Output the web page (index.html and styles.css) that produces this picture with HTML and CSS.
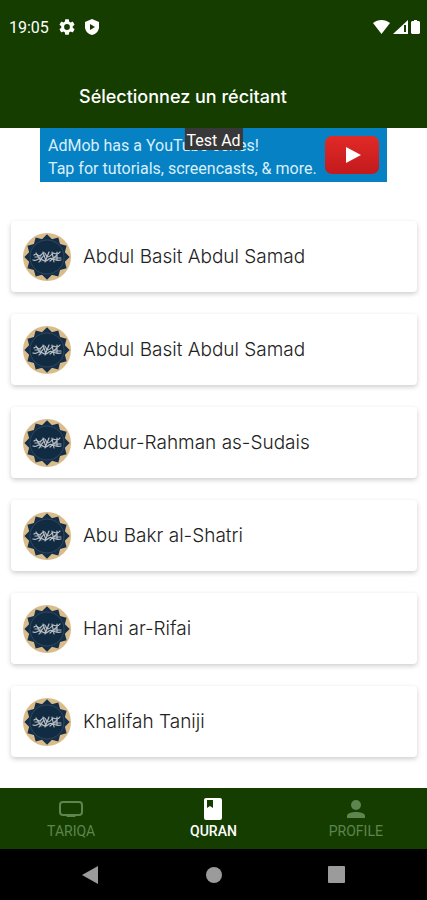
FILE: index.html
```html
<!DOCTYPE html>
<html lang="fr">

<head>
  <meta charset="utf-8">
  <meta name="viewport" content="width=device-width, initial-scale=1">
  <title>Quran</title>
  <link rel="stylesheet" href="styles.css">
</head>

<body>
  <svg class="sprite" aria-hidden="true">
    <symbol id="medallion" viewBox="0 0 48 48">
      <circle cx="24" cy="24" r="24" fill="#dabb8a" />
      <g fill="#142f49">
        <rect id="sq" x="8" y="8" width="32" height="32" transform="rotate(45 24 24)" />
        <use href="#sq" transform="rotate(30 24 24)" />
        <use href="#sq" transform="rotate(60 24 24)" />
      </g>
      <circle cx="24" cy="24" r="17" fill="#112b43" stroke="#36475a" />
      <g fill="none" stroke="#b9bec3" stroke-width="1.2" stroke-linecap="round">
        <path d="M11 22c3-3 4 3 7 0s4-3 5 0 4 2 6-1 4 3 8-2" />
        <path d="M10 27c4 2 5-3 8-1s5 3 8 0 5 3 12 1" />
        <path d="M13 20l5 8M20 19l3 9M26 19l-4 10M29 19l2 10M34 19v8M16 29l5-7M27 28l7-6M12 24h6M31 25h7" />
      </g>
    </symbol>
  </svg>

  <header class="header">
    <div class="status">
      <span class="time">19:05</span>
      <svg width="16" height="16" viewBox="2 2 20 20">
        <path fill="#fff" d="M19.14 12.94a7 7 0 0 0 0-1.88l2.03-1.58a.5.5 0 0 0 .12-.61l-1.92-3.32a.5.5 0 0 0-.59-.22l-2.39.96a7 7 0 0 0-1.62-.94l-.36-2.54a.5.5 0 0 0-.48-.41h-3.84a.5.5 0 0 0-.47.41l-.36 2.54a7 7 0 0 0-1.62.94l-2.39-.96a.5.5 0 0 0-.59.22L2.74 8.87a.5.5 0 0 0 .12.61l2.03 1.58a7 7 0 0 0 0 1.88l-2.03 1.58a.5.5 0 0 0-.12.61l1.92 3.32c.12.22.37.29.59.22l2.39-.96a7 7 0 0 0 1.62.94l.36 2.54c.05.24.24.41.48.41h3.84c.24 0 .44-.17.47-.41l.36-2.54a7 7 0 0 0 1.62-.94l2.39.96c.22.08.47 0 .59-.22l1.92-3.32a.5.5 0 0 0-.12-.61zM12 15.6a3.6 3.6 0 1 1 0-7.2 3.6 3.6 0 0 1 0 7.2z" />
      </svg>
      <svg width="14" height="16" viewBox="0 0 14 16">
        <path fill="#fff" d="M7 0l7 3v5c0 4-3 7-7 8-4-1-7-4-7-8V3z" />
        <path fill="#153d00" d="M5 5l5 3-5 3z" />
      </svg>
      <div class="signals">
        <svg width="17" height="14" viewBox="0 0 17 14">
          <path fill="#fff" d="M0 3c5-4 12-4 17 0L8.500 14z" />
        </svg>
        <svg width="15" height="14" viewBox="0 0 15 14">
          <path fill="#fff" d="M0 14L15 0v14z" />
          <path fill="#153d00" d="M11 5h2v7h-2z" />
        </svg>
        <svg width="9" height="14" viewBox="0 0 9 14">
          <path fill="#fff" d="M3 0h3v1h2l1 1v11l-1 1H1l-1-1V2l1-1h2z" />
        </svg>
      </div>
    </div>
    <h1>Sélectionnez un récitant</h1>
  </header>

  <main>
    <a class="ad" href="#">
      <span class="ad-text">AdMob has a YouTube series!<br>Tap for tutorials, screencasts, &amp; more.</span>
      <svg class="play" width="54" height="38" viewBox="0 0 54 38">
        <defs>
          <linearGradient id="red" x2="0" y2="1">
            <stop stop-color="#e02a27" />
            <stop offset="1" stop-color="#c31a1c" />
          </linearGradient>
        </defs>
        <rect width="54" height="38" rx="7" fill="url(#red)" />
        <path d="M21 11l15 8-15 8z" fill="#fff" />
      </svg>
      <span class="ad-label">Test Ad</span>
    </a>

    <ul class="reciters">
      <li><a href="#"><svg><use href="#medallion" /></svg>Abdul Basit Abdul Samad</a></li>
      <li><a href="#"><svg><use href="#medallion" /></svg>Abdul Basit Abdul Samad</a></li>
      <li><a href="#"><svg><use href="#medallion" /></svg>Abdur-Rahman as-Sudais</a></li>
      <li><a href="#"><svg><use href="#medallion" /></svg>Abu Bakr al-Shatri</a></li>
      <li><a href="#"><svg><use href="#medallion" /></svg>Hani ar-Rifai</a></li>
      <li><a href="#"><svg><use href="#medallion" /></svg>Khalifah Taniji</a></li>
    </ul>
  </main>

  <nav class="tabs">
    <a href="#">
      <svg width="26" height="24" viewBox="0 0 26 24">
        <rect x="2" y="5" width="22" height="13" rx="3" fill="none" stroke="currentColor" stroke-width="2" />
        <path d="M7 18h12l-2 2H9z" fill="currentColor" />
      </svg>
      TARIQA
    </a>
    <a href="#" class="active">
      <svg width="26" height="24" viewBox="0 0 26 24">
        <path fill="currentColor" fill-rule="evenodd" d="M6 1h14a2 2 0 0 1 2 2v18a2 2 0 0 1-2 2H6a2 2 0 0 1-2-2V3a2 2 0 0 1 2-2zM7 3v8l3-2 3 2V3z" />
      </svg>
      QURAN
    </a>
    <a href="#">
      <svg width="26" height="24" viewBox="0 0 26 24">
        <circle cx="13" cy="8" r="5" fill="currentColor" />
        <path d="M4 21v-2c0-3 5-4 9-4s9 1 9 4v2z" fill="currentColor" />
      </svg>
      PROFILE
    </a>
  </nav>

  <div class="system">
    <button aria-label="Back"><svg width="18" height="18" viewBox="0 0 18 18"><path d="M17 0v18L1 9z" /></svg></button>
    <button aria-label="Home"><svg width="18" height="18" viewBox="0 0 18 18"><circle cx="9" cy="9" r="8" /></svg></button>
    <button aria-label="Recents"><svg width="18" height="18" viewBox="0 0 18 18"><rect width="17" height="17" rx="1" /></svg></button>
  </div>
</body>

</html>
```

FILE: styles.css
```css
* {
  box-sizing: border-box;
}

body {
  margin: 0;
  height: 100vh;
  display: flex;
  flex-direction: column;
  background-color: white;
  font-family: Roboto, sans-serif;
}

a {
  color: inherit;
  text-decoration: none;
}

.sprite {
  position: absolute;
  width: 0;
  height: 0;
}

.header {
  background-color: #153d00;
  color: white;
  padding: 15px 7px 19px 9px;
}

.status {
  display: flex;
  align-items: center;
  gap: 10px;
  height: 24px;
}

.time {
  font-size: 16px;
}

.signals {
  display: flex;
  gap: 3px;
  margin-left: auto;
}

h1 {
  margin: 46px 0 0 70px;
  font-family: Inter, sans-serif;
  font-size: 18px;
  font-weight: 500;
  line-height: 24px;
}

main {
  flex: 1;
  min-height: 0;
  overflow: hidden;
}

.ad {
  position: relative;
  display: flex;
  align-items: center;
  justify-content: space-between;
  width: 82%;
  max-width: 347px;
  height: 54px;
  margin: 0 auto;
  padding: 0 8px;
  background-color: #0681c4;
  color: #d9effa;
}

.ad-text {
  padding-top: 3px;
  font-size: 16px;
  line-height: 23px;
  white-space: nowrap;
}

.play {
  flex: none;
}

.ad-label {
  position: absolute;
  top: 0;
  left: 50%;
  transform: translateX(-50%);
  padding: 3px 2px 0;
  background-color: #383838;
  color: white;
  font-size: 16px;
  line-height: 19px;
  white-space: nowrap;
}

.reciters {
  list-style: none;
  margin: 0;
  padding: 39px 10px 0 11px;
  display: flex;
  flex-direction: column;
  gap: 22px;
}

.reciters a {
  display: flex;
  align-items: center;
  gap: 12px;
  height: 71px;
  padding: 0 12px;
  border-radius: 4px;
  box-shadow: 0 2px 5px rgba(0, 0, 0, 0.2);
  color: #222;
  font-family: Inter, sans-serif;
  font-size: 19px;
  font-weight: 300;
}

.reciters svg {
  width: 48px;
  height: 48px;
  flex: none;
}

.tabs {
  display: flex;
  height: 61px;
  background-color: #153d00;
}

.tabs a {
  flex: 1;
  display: flex;
  flex-direction: column;
  align-items: center;
  padding-top: 9px;
  color: #5c8550;
  font-size: 14px;
  line-height: 20px;
}

.tabs .active {
  color: white;
  font-weight: 500;
}

.system {
  display: flex;
  height: 51px;
  padding: 0 28px;
  background-color: black;
}

.system button {
  flex: 1;
  padding: 0;
  border: none;
  background: none;
}

.system svg {
  display: block;
  margin: 0 auto;
  fill: #9b9b9b;
}
```
